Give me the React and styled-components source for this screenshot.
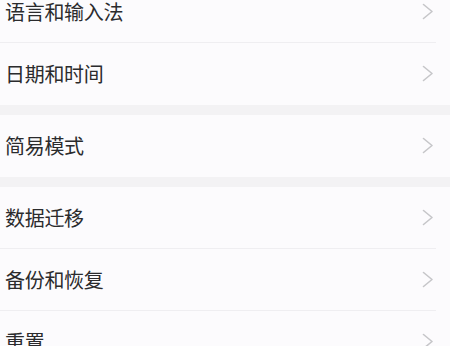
import styled, { createGlobalStyle } from 'styled-components';

const GlobalStyle = createGlobalStyle`
  html, body {
    margin: 0;
    padding: 0;
    background: #f3f2f4;
    overflow: hidden;
  }
  body {
    font-family: "Noto Sans CJK SC", "Noto Sans", sans-serif;
  }
`;

const Page = styled.div`
  width: 450px;
  height: 346px;
  overflow: hidden;
  background: #f3f2f4;
`;

const List = styled.div`
  margin-top: -19px;
  display: flex;
  flex-direction: column;
  gap: 10px;
`;

const Group = styled.div`
  background: #fcfbfd;
  display: flex;
  flex-direction: column;
`;

const Row = styled.div`
  height: 61px;
  display: flex;
  align-items: center;
  justify-content: space-between;
  padding: 0 16px 0 5px;
  border-bottom: 1px solid ${(p) => (p.last ? '#fcfbfd' : '#efeef1')};
  margin-right: 14px;
  padding-right: 2px;
`;

const Label = styled.span`
  font-size: 20px;
  color: #2b2b2d;
  letter-spacing: -0.3px;
`;

const Chevron = styled.svg`
  width: 12px;
  height: 17px;
  flex-shrink: 0;
`;

function Arrow() {
  return (
    <Chevron viewBox="0 0 12 17">
      <polyline
        points="1.5,1.5 10,8.5 1.5,15.5"
        fill="none"
        stroke="#c6c6c9"
        strokeWidth="1.6"
        strokeLinecap="round"
        strokeLinejoin="round"
      />
    </Chevron>
  );
}

const groups = [
  ['语言和输入法', '日期和时间'],
  ['简易模式'],
  ['数据迁移', '备份和恢复', '重置'],
];

function App() {
  return (
    <Page>
      <GlobalStyle />
      <List>
        {groups.map((items, gi) => (
          <Group key={gi}>
            {items.map((label, i) => (
              <Row key={label} last={i === items.length - 1}>
                <Label>{label}</Label>
                <Arrow />
              </Row>
            ))}
          </Group>
        ))}
      </List>
    </Page>
  );
}

export default App;
